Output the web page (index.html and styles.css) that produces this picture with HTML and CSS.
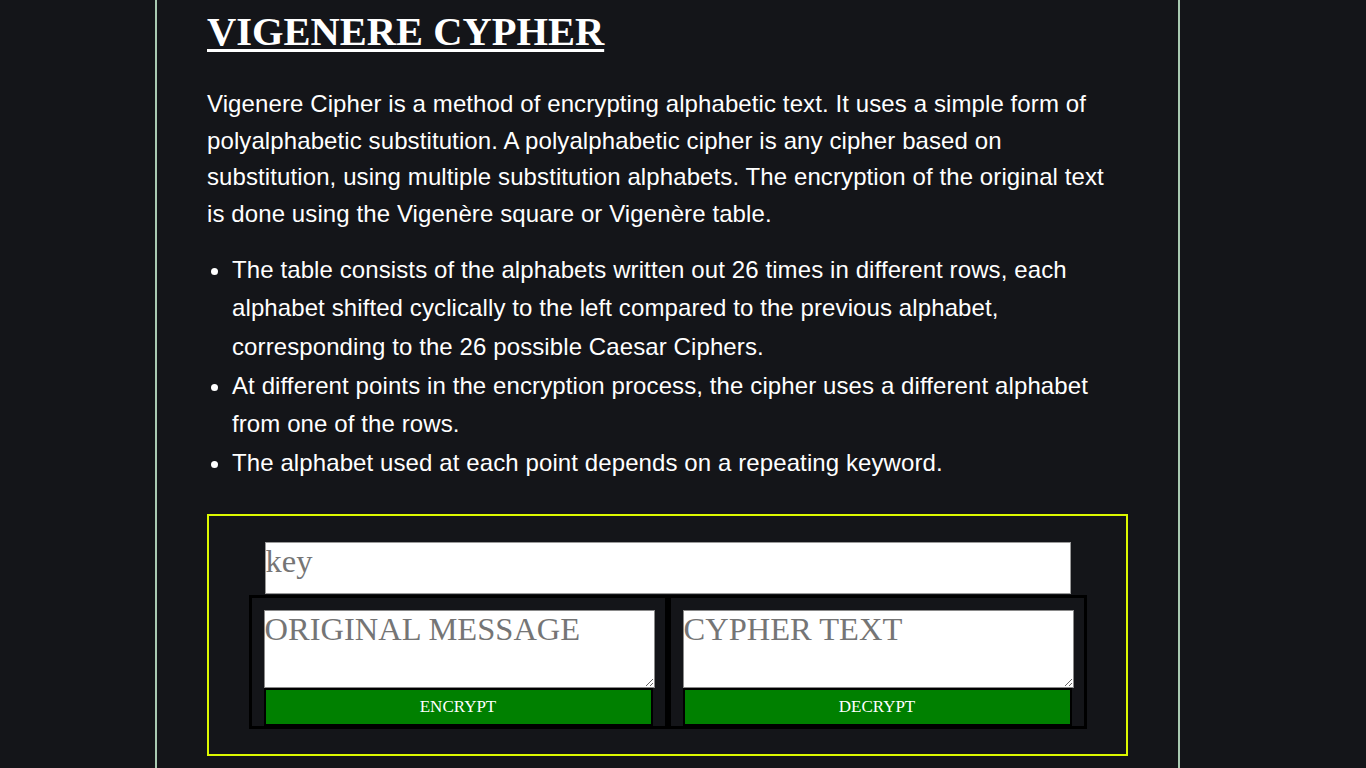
FILE: index.html
```html
<!DOCTYPE html>
<html lang="en">
<head>
<meta charset="utf-8">
<title>Vigenere Cypher</title>
<link rel="stylesheet" href="styles.css">
</head>
<body>
<main class="page">
  <h1 class="title">VIGENERE CYPHER</h1>
  <p class="intro">Vigenere Cipher is a method of encrypting alphabetic text. It uses a simple form of polyalphabetic substitution. A polyalphabetic cipher is any cipher based on substitution, using multiple substitution alphabets. The encryption of the original text is done using the Vigenère square or Vigenère table.</p>
  <ul class="points">
    <li>The table consists of the alphabets written out 26 times in different rows, each alphabet shifted cyclically to the left compared to the previous alphabet, corresponding to the 26 possible Caesar Ciphers.</li>
    <li>At different points in the encryption process, the cipher uses a different alphabet from one of the rows.</li>
    <li>The alphabet used at each point depends on a repeating keyword.</li>
  </ul>
  <section class="tool">
    <input class="key" type="text" placeholder="key">
    <div class="panels">
      <div class="panel panel-left">
        <textarea class="msg" placeholder="ORIGINAL MESSAGE"></textarea>
        <button class="action">ENCRYPT</button>
      </div>
      <div class="panel panel-right">
        <textarea class="msg" placeholder="CYPHER TEXT"></textarea>
        <button class="action">DECRYPT</button>
      </div>
    </div>
  </section>
</main>
</body>
</html>
```
FILE: styles.css
```css
html, body {
  margin: 0;
  padding: 0;
  background: #141519;
}
body {
  height: 768px;
  overflow: hidden;
}
.page {
  box-sizing: border-box;
  width: 1025px;
  min-height: 768px;
  margin-left: 155px;
  padding: 9px 50px 0 50px;
  border-left: 2px solid #a9c9b1;
  border-right: 2px solid #a9c9b1;
  color: #ffffff;
}
.title {
  margin: 0;
  font-family: "Liberation Serif", "Times New Roman", serif;
  font-size: 40.5px;
  font-weight: bold;
  line-height: 46px;
  text-decoration: underline;
  text-decoration-thickness: 3px;
  text-underline-offset: 4px;
}
.intro {
  margin: 31px 0 0 0;
  padding-right: 10px;
  font-family: "Liberation Sans", Arial, sans-serif;
  font-size: 24px;
  line-height: 36.7px;
  letter-spacing: 0.1px;
}
.points {
  margin: 18px 0 0 0;
  padding-left: 25px;
  padding-right: 10px;
  font-family: "Liberation Sans", Arial, sans-serif;
  font-size: 24px;
  line-height: 38.6px;
  letter-spacing: 0.1px;
}
.tool {
  margin-top: 32px;
  border: 2px solid #dcf800;
  padding: 26px 0 25px 0;
  display: flex;
  flex-direction: column;
  align-items: center;
}
.key {
  box-sizing: border-box;
  width: 806px;
  height: 52px;
  margin: 0;
  padding: 0 0 13px 0;
  border: 1px solid #9a9a9a;
  background: #ffffff;
  font-family: "Liberation Serif", "Times New Roman", serif;
  font-size: 32.5px;
  color: #222;
  outline: none;
}
.key::placeholder,
.msg::placeholder {
  color: #757575;
}
.panels {
  display: flex;
  margin-top: 1px;
}
.panel {
  box-sizing: border-box;
  width: 419px;
  border: 3px solid #000000;
  padding: 12px 0 0 12px;
  display: flex;
  flex-direction: column;
  align-items: flex-start;
}
.msg {
  box-sizing: border-box;
  display: block;
  width: 391px;
  height: 78px;
  margin: 0;
  padding: 0;
  border: 1px solid #8a8a8a;
  background: #ffffff;
  font-family: "Liberation Serif", "Times New Roman", serif;
  font-size: 32.5px;
  color: #222;
  outline: none;
}
.action {
  box-sizing: border-box;
  width: 389px;
  height: 38px;
  margin: 0;
  padding: 0;
  border: 2px solid #000000;
  background: #008000;
  color: #ffffff;
  font-family: "Liberation Serif", "Times New Roman", serif;
  font-size: 17px;
  cursor: pointer;
}
```
